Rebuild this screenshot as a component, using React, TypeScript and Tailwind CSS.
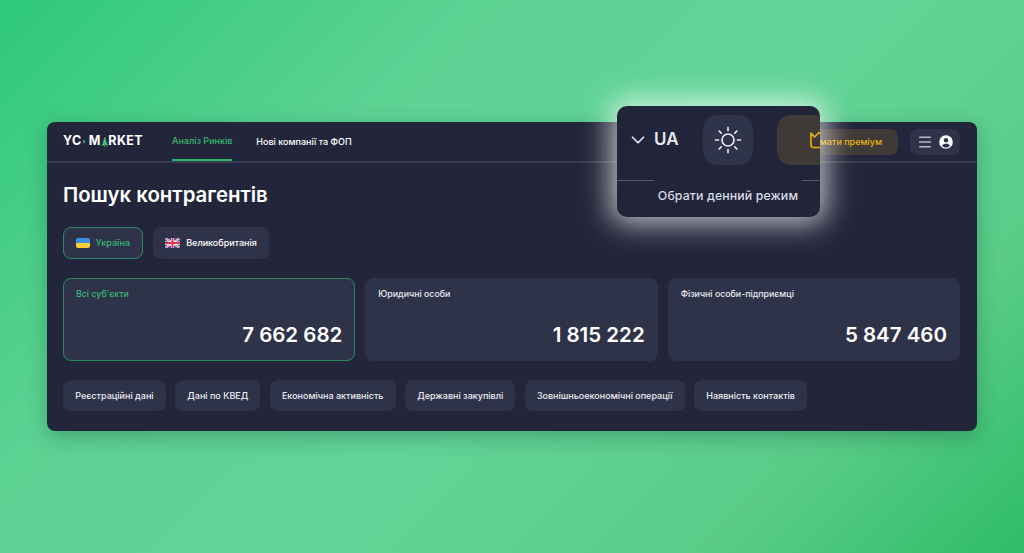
import { ChevronDown, Menu } from "lucide-react";

const stats = [
  { label: "Всі суб'єкти", value: "7 662 682", active: true },
  { label: "Юридичні особи", value: "1 815 222", active: false },
  { label: "Фізичні особи-підприємці", value: "5 847 460", active: false },
];

const filters = [
  "Реєстраційні дані",
  "Дані по КВЕД",
  "Економічна активність",
  "Державні закупівлі",
  "Зовнішньоекономічні операції",
  "Наявність контактів",
];

function TreeIcon() {
  return (
    <svg viewBox="0 0 14 18" className="h-[14px] w-[11px]">
      <path d="M7 1 L10 6 L8.8 6 L11.5 10.5 L10 10.5 L13.5 15.5 L0.5 15.5 L4 10.5 L2.5 10.5 L5.2 6 L4 6 Z" fill="#2fb46c" />
      <rect x="6" y="15.5" width="2" height="2" fill="#2fb46c" />
      <circle cx="7" cy="1.5" r="1" fill="#f5d94e" />
      <circle cx="6" cy="8" r="0.9" fill="#ffffff" />
      <circle cx="9" cy="12" r="0.9" fill="#ffffff" />
      <circle cx="4.5" cy="13" r="0.9" fill="#f5d94e" />
    </svg>
  );
}

function Logo() {
  return (
    <div className="flex w-[80px] items-center text-[12.5px] font-bold tracking-[0.03em] text-white">
      <span>YC</span>
      <span className="ml-[1px] mr-[4px] size-[3px] rounded-full bg-[#2fb46c]" />
      <span>M</span>
      <TreeIcon />
      <span>RKET</span>
    </div>
  );
}

function UkraineFlag() {
  return (
    <span className="flex h-[10px] w-[14px] flex-col overflow-hidden rounded-[2px]">
      <span className="h-1/2 bg-[#3d8ee6]" />
      <span className="h-1/2 bg-[#f7cf35]" />
    </span>
  );
}

function UkFlag() {
  return (
    <svg viewBox="0 0 60 40" className="h-[10px] w-[15px] rounded-[2px]">
      <rect width="60" height="40" fill="#3a4a9a" />
      <path d="M0 0 L60 40 M60 0 L0 40" stroke="#fff" strokeWidth="8" />
      <path d="M0 0 L60 40 M60 0 L0 40" stroke="#d8344a" strokeWidth="3" />
      <path d="M30 0 V40 M0 20 H60" stroke="#fff" strokeWidth="13" />
      <path d="M30 0 V40 M0 20 H60" stroke="#d8344a" strokeWidth="8" />
    </svg>
  );
}

function CrownIcon() {
  return (
    <svg viewBox="0 0 14 18" fill="none" className="h-[18px] w-[14px]">
      <path
        d="M1 2 L4.5 6 L9 1.5 L13 6 V14 Q13 16.5 10.5 16.5 H3.5 Q1 16.5 1 14 Z"
        stroke="#eab308"
        strokeWidth="1.6"
        strokeLinejoin="round"
      />
    </svg>
  );
}

function SunIcon() {
  return (
    <svg viewBox="0 0 28 28" fill="none" stroke="#e8eaf0" strokeWidth="1.7" strokeLinecap="round" className="size-[28px]">
      <circle cx="14" cy="14" r="6" />
      <path d="M14 1.5 V4.5 M14 23.5 V26.5 M1.5 14 H4.5 M23.5 14 H26.5 M5.2 5.2 L7.2 7.2 M20.8 20.8 L22.8 22.8 M5.2 22.8 L7.2 20.8 M20.8 7.2 L22.8 5.2" />
    </svg>
  );
}

function UserIcon() {
  return (
    <svg viewBox="0 0 14 14" className="size-[14px]">
      <circle cx="7" cy="7" r="6.8" fill="#fff" />
      <circle cx="7" cy="5.2" r="2.2" fill="#2f3349" />
      <path d="M3 10.8 C3.8 9.2 5.2 8.8 7 8.8 C8.8 8.8 10.2 9.2 11 10.8 C10 12 8.6 12.6 7 12.6 C5.4 12.6 4 12 3 10.8 Z" fill="#2f3349" />
    </svg>
  );
}

function ThemePopup() {
  return (
    <div className="absolute left-[570px] top-[-16px] h-[111px] w-[203px] overflow-hidden rounded-[10px] bg-[#22253a] shadow-[0_0_28px_7px_rgba(255,255,255,0.68)]">
      <div className="flex h-[74px] items-center gap-[24px] pb-[7px] pl-[10px]">
        <div className="flex items-center gap-[5px] text-white">
          <ChevronDown className="size-[22px] text-[#e6e8ef]" strokeWidth={1.9} />
          <span className="text-[17px] font-semibold leading-none text-[#e6e8ef]">UA</span>
        </div>
        <div className="flex size-[50px] shrink-0 items-center justify-center rounded-[14px] bg-[#2f3349]">
          <SunIcon />
        </div>
        <div className="flex h-[50px] w-[120px] shrink-0 items-center rounded-[14px] bg-[#3f3a38] pl-[33px]">
          <CrownIcon />
        </div>
      </div>
      <div className="flex items-start justify-between">
        <span className="h-[1px] w-[37px] bg-[#55586a]" />
        <span className="h-[1px] w-[18px] bg-[#55586a]" />
      </div>
      <p className="mt-[6px] pl-[19px] text-center text-[12.3px] font-medium leading-[18px] tracking-[0.01em] text-[#d9dce6]">
        Обрати денний режим
      </p>
    </div>
  );
}

export default function App() {
  return (
    <div
      className="h-[553px] w-[1024px] overflow-hidden bg-[linear-gradient(135deg,#2ec97a_0%,#5cd293_30%,#62d497_55%,#5acc88_80%,#2ebd67_100%)] px-[47px] pt-[122px]"
      style={{ fontFamily: "Inter, 'Noto Sans', sans-serif" }}
    >
      <div className="relative h-[309px] w-[930px] rounded-[8px] bg-[#23263a] shadow-[0_6px_20px_rgba(20,60,50,0.3)]">
        <header className="flex h-[41px] items-center justify-between border-b-2 border-[#3a3d4f] pl-[16px] pr-[17px]">
          <div className="flex h-full items-center">
            <Logo />
            <nav className="ml-[29px] flex h-full items-center gap-[24px] text-[9px] font-medium">
              <a className="flex h-full items-center border-b-2 border-[#2fb46c] pt-[1px] text-[#35b873]">
                Аналіз Ринків
              </a>
              <a className="text-white">Нові компанії та ФОП</a>
            </nav>
          </div>
          <div className="flex items-center gap-[12px]">
            <button className="flex h-[26px] w-[121px] items-center justify-end rounded-[8px] bg-[#3f3a38] pr-[16px] text-[9px] font-medium text-[#eab308]">
              Отримати преміум
            </button>
            <button className="flex h-[26px] w-[50px] items-center justify-center gap-[6px] rounded-[8px] bg-[#2f3349]">
              <Menu className="size-[16px] text-[#b9bcc8]" strokeWidth={2.2} />
              <UserIcon />
            </button>
          </div>
        </header>

        <main className="px-[16px] pr-[17px]">
          <h1 className="mt-[18px] text-[20.4px] font-semibold leading-[27px] text-white">Пошук контрагентів</h1>

          <div className="mt-[19px] flex gap-[10px] text-[9px] font-medium">
            <button className="flex h-[32px] w-[80px] items-center justify-center gap-[6px] rounded-[8px] border border-[#278a5e] bg-[#2f3349] text-[#35b873]">
              <UkraineFlag />
              Україна
            </button>
            <button className="flex h-[32px] w-[116px] items-center justify-center gap-[6px] rounded-[8px] bg-[#2f3349] text-white">
              <UkFlag />
              Великобританія
            </button>
          </div>

          <div className="mt-[19px] grid grid-cols-3 gap-[10px]">
            {stats.map((item) => (
              <div
                key={item.label}
                className={`flex h-[83px] flex-col justify-between rounded-[8px] border bg-[#2f3349] px-[12px] pb-[13px] pt-[8px] ${
                  item.active ? "border-[#278a5e]" : "border-[#2f3349]"
                }`}
              >
                <span className={`text-[8.8px] font-medium leading-[13px] ${item.active ? "text-[#35b873]" : "text-[#e8eaf0]"}`}>
                  {item.label}
                </span>
                <span className="text-right text-[20.5px] font-semibold leading-[25px] text-white">{item.value}</span>
              </div>
            ))}
          </div>

          <div className="mt-[19px] flex gap-[9.3px]">
            {filters.map((item) => (
              <button
                key={item}
                className="flex h-[31px] items-center rounded-[8px] bg-[#2f3349] px-[12.2px] text-[9px] font-medium text-[#eceef3]"
              >
                {item}
              </button>
            ))}
          </div>
        </main>

        <ThemePopup />
      </div>
    </div>
  );
}
